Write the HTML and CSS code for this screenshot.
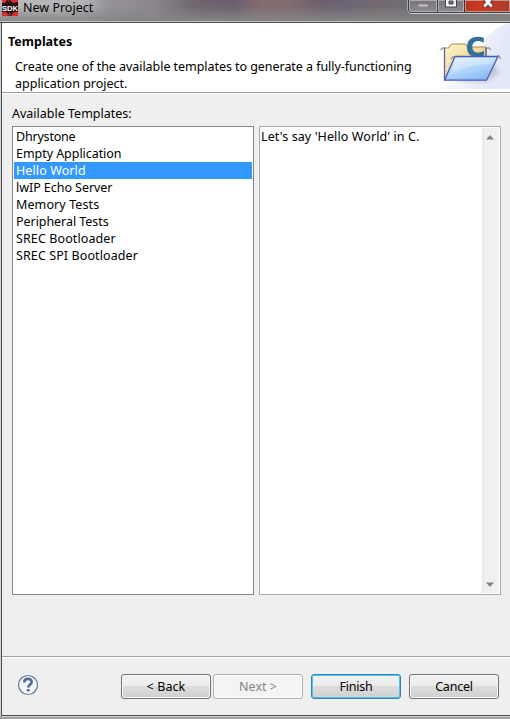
FILE: index.html
```html
<!DOCTYPE html>
<html lang="en">
<head>
<meta charset="utf-8">
<title>New Project</title>
<link rel="stylesheet" href="styles.css">
</head>
<body>
<div class="window">
  <header class="titlebar">
    <svg class="app-icon" width="16" height="16" viewBox="0 0 16 16">
      <rect width="16" height="16" fill="#241013"/>
      <path d="M0 0h5L3 3H0zM8 0h8v2l-5 1zM0 12h4l4 4H0zM9 16l3-4h4v4z" fill="#d83030"/>
      <path d="M5 0l2 3 1-3zM5 16l3-4 2 4z" fill="#8a1d22"/>
      <text x="0" y="10.800" textLength="16" lengthAdjust="spacingAndGlyphs" class="app-icon-text">SDK</text>
    </svg>
    <span class="title">New Project</span>
    <div class="controls">
      <span class="control minimize"><svg width="12" height="6" viewBox="0 0 12 6"><rect x="1" y="3" width="10" height="3" fill="#bcb8bc" stroke="#77747a" stroke-width=".5"/></svg></span>
      <span class="control maximize"><svg width="12" height="8" viewBox="0 0 12 8"><path d="M.5-2h11v9H.5z" fill="#f5f5f5" stroke="#45464e"/><path d="M4 1h4v3H4z" fill="#77727a" stroke="#45464e"/></svg></span>
      <span class="control close"><svg width="12" height="8" viewBox="0 0 12 8"><path d="M2-2l8 9M10-2L2 7" stroke="#54323a" stroke-width="4.500"/><path d="M2.300-2l7.400 8.500M9.700-2L2.300 6.500" stroke="#fff" stroke-width="2.800"/></svg></span>
    </div>
  </header>
  <main class="dialog">
    <section class="banner">
      <div class="banner-text">
        <h1>Templates</h1>
        <p><span class="tight">Create one of the available templates to generate a fully-functioning</span><br>application project.</p>
      </div>
      <svg class="banner-art" width="75" height="66" viewBox="435 23 75 66">
        <defs>
          <linearGradient id="sky" x1="0" x2="1" y1="0" y2=".3"><stop offset="0" stop-color="#fff"/><stop offset=".6" stop-color="#f1f4fc"/><stop offset="1" stop-color="#dfe6f7"/></linearGradient>
          <linearGradient id="back" x1="0" y1="0" x2="1" y2="1"><stop stop-color="#fff5d2"/><stop offset="1" stop-color="#e5bd65"/></linearGradient>
          <linearGradient id="front" x1="0" y1="0" x2=".6" y2="1"><stop stop-color="#eaf5ff"/><stop offset=".5" stop-color="#b9dafc"/><stop offset="1" stop-color="#8cbaf4"/></linearGradient>
          <filter id="soft"><feGaussianBlur stdDeviation="2"/></filter>
        </defs>
        <path d="M435 89Q472 82 479 56Q484 30 510 23V89z" fill="url(#sky)"/>
        <path d="M472 89Q482 51 510 45V89z" fill="#e4eafa" opacity=".5"/>
        <path d="M455 81l39-17 5 9-13 9z" fill="#8791a8" opacity=".4" filter="url(#soft)"/>
        <path d="M440.500 50l2-2h3M486 48h3l2 2" fill="none" stroke="#9b9b9b" stroke-width="1.400"/>
        <path d="M444.500 79V48h4l3-4h14l2 3h18.500v31z" fill="url(#back)" stroke="#a98a40"/>
        <path d="M444.500 80V48M486 48v12" fill="none" stroke="#5863aa" stroke-width="1.300"/>
        <path d="M483.800 37.800V42.600C482 41.400 480.200 40.900 478.200 40.900 474.500 40.900 472.300 43.200 472.300 46.800S474.500 52.600 478 52.600C480.200 52.600 482.200 52 484 50.800V55.500C482 56.500 479.600 57 476.800 57 470.600 57 467 53.200 467 47.200 467 40.900 471 36.800 477.400 36.800 479.800 36.800 481.900 37.100 483.800 37.800z" fill="#326f9b"/>
        <path d="M451 59l2-2h3M497 56h2l2 3" fill="none" stroke="#9b9b9b" stroke-width="1.300"/>
        <path d="M455 56.500H498L486.500 80.200H444.500z" fill="url(#front)" stroke="#465fb4" stroke-width="1.300"/>
        <path d="M456.500 58H495l-4 6Q463 65 451 75z" fill="#fff" opacity=".25"/>
      </svg>
    </section>
    <section class="content">
      <label class="field-label">Available Templates:</label>
      <div class="panes">
        <ul class="templates">
          <li class="snug">Dhrystone</li>
          <li class="tight">Empty Application</li>
          <li class="selected wide">Hello World</li>
          <li class="tight">lwIP Echo Server</li>
          <li class="wide">Memory Tests</li>
          <li class="tight">Peripheral Tests</li>
          <li class="wide">SREC Bootloader</li>
          <li class="wide">SREC SPI Bootloader</li>
        </ul>
        <div class="description">
          <p class="wide">Let's say 'Hello World' in C.</p>
          <div class="scrollbar">
            <svg width="8" height="5" viewBox="0 0 8 5"><path d="M0 4.500L4 0l4 4.500z" fill="#858585"/></svg>
            <svg width="8" height="5" viewBox="0 0 8 5"><path d="M0 .5L4 5 8 .5z" fill="#858585"/></svg>
          </div>
        </div>
      </div>
    </section>
    <footer class="actions">
      <svg class="help" width="22" height="22" viewBox="0 0 22 22">
        <circle cx="11" cy="11" r="9.500" fill="#f3f5fa" stroke="#65779b" stroke-width="1.200"/>
        <path d="M7.200 8.400C7.200 3.800 14.700 3.800 14.700 8 14.700 10.900 11.200 10.500 11.200 13.500" fill="none" stroke="#536b98" stroke-width="2.600"/>
        <rect x="9.700" y="15" width="3" height="2.600" rx=".8" fill="#536b98"/>
      </svg>
      <button class="btn wide">&lt; Back</button>
      <button class="btn next" disabled>Next &gt;</button>
      <button class="btn finish">Finish</button>
      <button class="btn cancel">Cancel</button>
    </footer>
  </main>
</div>
</body>
</html>
```
FILE: styles.css
```css
* { box-sizing: border-box; }
body { margin: 0; font: 12.5px/17px "Noto Sans", "Open Sans", sans-serif; color: #000; overflow: hidden; }
h1, p, ul { margin: 0; padding: 0; }
svg { display: block; flex: none; }
span { white-space: nowrap; }
.window { width: 510px; height: 719px; display: flex; flex-direction: column; background: #a1a1a4; }
.titlebar { height: 23px; flex: none; display: flex; align-items: flex-start; border-bottom: 1px solid #4d4d4f;
  background: linear-gradient(#0000 0 21px, #c0c0c0 21px), linear-gradient(#85858500 25%, #858585d0 85%), linear-gradient(90deg, #b9b9bc 0, #b5b5b8 80px, #969398 110px, #8a858c 155px, #6f6670 195px, #6a5f6c 235px, #846c70 260px, #826c71 285px, #6f616e 320px, #6a6476 345px, #73696e 375px, #6e6d76 405px, #77757c 510px); }
.app-icon { margin-left: 2px; }
.app-icon-text { font: bold 8px "Liberation Sans", sans-serif; fill: #fff; }
.title { margin-left: 5px; line-height: 16px; }
.controls { display: flex; height: 13px; width: 102px; margin-left: auto; border: 1px solid #3f3e42; border-top: 0; border-right: 0; border-radius: 0 0 0 4px; box-shadow: 0 1px 0 #d0cfd1, -1px 0 0 #aaa8ac; }
.control { display: flex; justify-content: center; overflow: hidden; background: linear-gradient(#77747a, #8e8a90); box-shadow: inset 0 0 0 1px #c7c5c9aa; }
.minimize { width: 28px; border-radius: 0 0 0 3px; padding-top: 1px; }
.maximize { width: 27px; border-left: 1px solid #454247; }
.close { flex: 1; border-left: 1px solid #54252a; background: linear-gradient(90deg, #b9341f, #cf3c21 40%, #a83a2c); }
.dialog { flex: 1; margin-left: 1px; margin-bottom: 3px; border-left: 1px solid #4a4b4e; border-bottom: 1px solid #4a4b4e; background: #efefef; display: flex; flex-direction: column; box-shadow: -1px 0 0 #d4d4d4, 0 1px 0 #d0d0d0; }
.banner { height: 71px; flex: none; display: flex; background: #fff; border-bottom: 1px solid #fff; box-shadow: inset 0 -1px 0 #9b9b9b; }
.banner-text { flex: 1; padding: 10px 0 0 6px; }
h1 { font-size: 12.5px; line-height: 17px; }
.banner-text p { padding: 8px 0 0 7px; }
.tight { letter-spacing: -.05px; }
.snug { letter-spacing: -.2px; }
.wide { letter-spacing: .1px; }
.content { flex: 1; padding: 11px 9px 0 10px; }
.field-label { display: block; height: 21px; line-height: 17px; }
.panes { display: grid; grid-template-columns: 242px 242px; gap: 5px; height: 469px; }
.templates { list-style: none; border: 1px solid #828790; background: #fff; padding: 1px; }
.templates li { height: 17px; padding-left: 2px; }
.selected { background: #3399ff; color: #fff; }
.description { display: flex; border: 1px solid #a7abb0; background: #fff; padding: 1px; }
.description p { flex: 1; }
.scrollbar { width: 17px; background: linear-gradient(90deg, #e7e7e7, #f0f0f0 3px); border-right: 1px solid #f6f6f6; display: flex; flex-direction: column; justify-content: space-between; align-items: center; padding: 7px 0 6px; }
.actions { height: 59px; flex: none; border-top: 1px solid #a0a0a0; box-shadow: inset 0 1px 0 #fff; display: flex; align-items: flex-start; padding: 17px 11px 0 15px; }
.help { margin-right: 82px; }
.btn { font: inherit; color: #000; width: 90px; height: 25px; padding: 0; border: 1px solid #707070; border-radius: 3px; background: linear-gradient(#f2f2f2, #ebebeb 48%, #dddddd 49%, #cfcfcf); box-shadow: inset 0 0 0 1px #fbfbfb; }
.next { margin-left: 2px; border-color: #adb2b5; background: #f4f4f4; color: #838383; }
.finish { margin-left: 8px; border-color: #3c7fb1; box-shadow: inset 0 0 0 1px #48c8f0; }
.cancel { margin-left: 8px; }
.finish, .cancel { letter-spacing: -.2px; }
```
